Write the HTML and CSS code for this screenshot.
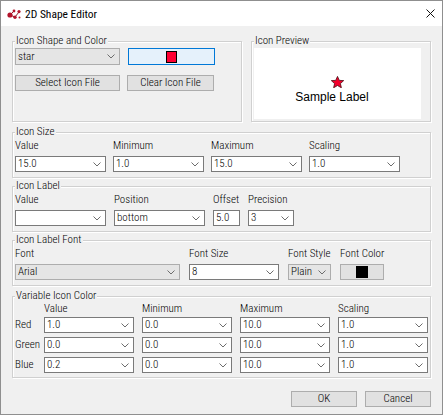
FILE: index.html
```html
<!DOCTYPE html>
<html>
<head>
<meta charset="utf-8">
<title>2D Shape Editor</title>
<link rel="stylesheet" href="styles.css">
</head>
<body>
<div class="window">
  <div class="titlebar">
    <svg class="appicon" width="14" height="10" viewBox="0 0 14 10">
      <g stroke="#8e1a28" stroke-width="1" fill="none">
        <line x1="3" y1="6" x2="8" y2="8"/>
        <line x1="3" y1="6" x2="7" y2="2"/>
        <line x1="8" y1="8" x2="12" y2="3"/>
      </g>
      <g fill="#b3142b">
        <circle cx="3" cy="6" r="2.6"/>
        <circle cx="8" cy="8.2" r="1.7"/>
        <circle cx="7" cy="2" r="1.4"/>
        <circle cx="12" cy="2.6" r="1.6"/>
        <circle cx="12.5" cy="8.5" r="1"/>
      </g>
    </svg>
    <span class="title">2D Shape Editor</span>
    <svg class="close" width="9" height="9" viewBox="0 0 9 9">
      <path d="M0.5 0.5 L8.5 8.5 M8.5 0.5 L0.5 8.5" stroke="#111" stroke-width="1" fill="none"/>
    </svg>
  </div>

  <div class="content">
    <div class="toprow">
      <fieldset class="group g-shape">
        <legend>Icon Shape and Color</legend>
        <div class="shape-row">
          <div class="combo gray w-shape"><span>star</span><svg class="chev" width="8" height="5" viewBox="0 0 8 5"><polyline points="0.5,0.5 4,4 7.5,0.5"/></svg></div>
          <div class="colorbtn focused"><span class="swatch red"></span></div>
        </div>
        <div class="shape-row buttons">
          <div class="btn w-shape">Select Icon File</div>
          <div class="btn w-clear">Clear Icon File</div>
        </div>
      </fieldset>

      <fieldset class="group g-preview">
        <legend>Icon Preview</legend>
        <div class="preview">
          <svg class="star" width="13" height="12" viewBox="0 0 13 12">
            <polygon points="6.5,0.4 8.3,4.4 12.7,4.6 9.4,7.6 10.4,11.8 6.5,9.5 2.6,11.8 3.6,7.6 0.3,4.6 4.7,4.4" fill="#f2002c" stroke="#4a0a12" stroke-width="0.8" stroke-linejoin="miter"/>
          </svg>
          <div class="sample">Sample Label</div>
        </div>
      </fieldset>
    </div>

    <fieldset class="group">
      <legend>Icon Size</legend>
      <div class="grid g-size">
        <div class="lbl">Value</div>
        <div class="lbl">Minimum</div>
        <div class="lbl">Maximum</div>
        <div class="lbl">Scaling</div>
        <div class="combo"><span>15.0</span><svg class="chev" width="8" height="5" viewBox="0 0 8 5"><polyline points="0.5,0.5 4,4 7.5,0.5"/></svg></div>
        <div class="combo"><span>1.0</span><svg class="chev" width="8" height="5" viewBox="0 0 8 5"><polyline points="0.5,0.5 4,4 7.5,0.5"/></svg></div>
        <div class="combo"><span>15.0</span><svg class="chev" width="8" height="5" viewBox="0 0 8 5"><polyline points="0.5,0.5 4,4 7.5,0.5"/></svg></div>
        <div class="combo"><span>1.0</span><svg class="chev" width="8" height="5" viewBox="0 0 8 5"><polyline points="0.5,0.5 4,4 7.5,0.5"/></svg></div>
      </div>
    </fieldset>

    <fieldset class="group">
      <legend>Icon Label</legend>
      <div class="grid g-label">
        <div class="lbl">Value</div>
        <div class="lbl">Position</div>
        <div class="lbl">Offset</div>
        <div class="lbl">Precision</div>
        <div class="combo"><span></span><svg class="chev" width="8" height="5" viewBox="0 0 8 5"><polyline points="0.5,0.5 4,4 7.5,0.5"/></svg></div>
        <div class="combo"><span>bottom</span><svg class="chev" width="8" height="5" viewBox="0 0 8 5"><polyline points="0.5,0.5 4,4 7.5,0.5"/></svg></div>
        <div class="field"><span>5.0</span></div>
        <div class="combo"><span>3</span><svg class="chev" width="8" height="5" viewBox="0 0 8 5"><polyline points="0.5,0.5 4,4 7.5,0.5"/></svg></div>
      </div>
    </fieldset>

    <fieldset class="group">
      <legend>Icon Label Font</legend>
      <div class="grid g-font">
        <div class="lbl">Font</div>
        <div class="lbl">Font Size</div>
        <div class="lbl">Font Style</div>
        <div class="lbl">Font Color</div>
        <div class="combo gray"><span>Arial</span><svg class="chev" width="8" height="5" viewBox="0 0 8 5"><polyline points="0.5,0.5 4,4 7.5,0.5"/></svg></div>
        <div class="combo"><span>8</span><svg class="chev" width="8" height="5" viewBox="0 0 8 5"><polyline points="0.5,0.5 4,4 7.5,0.5"/></svg></div>
        <div class="combo gray"><span>Plain</span><svg class="chev" width="8" height="5" viewBox="0 0 8 5"><polyline points="0.5,0.5 4,4 7.5,0.5"/></svg></div>
        <div class="colorbtn"><span class="swatch black"></span></div>
      </div>
    </fieldset>

    <fieldset class="group g-varbox">
      <legend>Variable Icon Color</legend>
      <div class="grid g-var">
        <div></div>
        <div class="lbl">Value</div>
        <div class="lbl">Minimum</div>
        <div class="lbl">Maximum</div>
        <div class="lbl">Scaling</div>

        <div class="rowlbl">Red</div>
        <div class="combo"><span>1.0</span><svg class="chev" width="8" height="5" viewBox="0 0 8 5"><polyline points="0.5,0.5 4,4 7.5,0.5"/></svg></div>
        <div class="combo"><span>0.0</span><svg class="chev" width="8" height="5" viewBox="0 0 8 5"><polyline points="0.5,0.5 4,4 7.5,0.5"/></svg></div>
        <div class="combo"><span>10.0</span><svg class="chev" width="8" height="5" viewBox="0 0 8 5"><polyline points="0.5,0.5 4,4 7.5,0.5"/></svg></div>
        <div class="combo"><span>1.0</span><svg class="chev" width="8" height="5" viewBox="0 0 8 5"><polyline points="0.5,0.5 4,4 7.5,0.5"/></svg></div>

        <div class="rowlbl">Green</div>
        <div class="combo"><span>0.0</span><svg class="chev" width="8" height="5" viewBox="0 0 8 5"><polyline points="0.5,0.5 4,4 7.5,0.5"/></svg></div>
        <div class="combo"><span>0.0</span><svg class="chev" width="8" height="5" viewBox="0 0 8 5"><polyline points="0.5,0.5 4,4 7.5,0.5"/></svg></div>
        <div class="combo"><span>10.0</span><svg class="chev" width="8" height="5" viewBox="0 0 8 5"><polyline points="0.5,0.5 4,4 7.5,0.5"/></svg></div>
        <div class="combo"><span>1.0</span><svg class="chev" width="8" height="5" viewBox="0 0 8 5"><polyline points="0.5,0.5 4,4 7.5,0.5"/></svg></div>

        <div class="rowlbl">Blue</div>
        <div class="combo"><span>0.2</span><svg class="chev" width="8" height="5" viewBox="0 0 8 5"><polyline points="0.5,0.5 4,4 7.5,0.5"/></svg></div>
        <div class="combo"><span>0.0</span><svg class="chev" width="8" height="5" viewBox="0 0 8 5"><polyline points="0.5,0.5 4,4 7.5,0.5"/></svg></div>
        <div class="combo"><span>10.0</span><svg class="chev" width="8" height="5" viewBox="0 0 8 5"><polyline points="0.5,0.5 4,4 7.5,0.5"/></svg></div>
        <div class="combo"><span>1.0</span><svg class="chev" width="8" height="5" viewBox="0 0 8 5"><polyline points="0.5,0.5 4,4 7.5,0.5"/></svg></div>
      </div>
    </fieldset>

    <div class="actions">
      <div class="btn w-action">OK</div>
      <div class="btn w-action">Cancel</div>
    </div>
  </div>
</div>
</body>
</html>
```

FILE: styles.css
```css
* {
  box-sizing: border-box;
}

html, body {
  margin: 0;
  padding: 0;
  background: #ffffff;
}

body {
  font-family: "Roboto Condensed", "Liberation Sans", sans-serif;
  font-weight: 300;
  font-size: 11px;
  color: #000;
}

.window {
  width: 443px;
  height: 415px;
  border: 1px solid #8f8f8f;
  background: #f0f0f0;
  display: flex;
  flex-direction: column;
}

.titlebar {
  height: 25px;
  flex: 0 0 25px;
  background: #ffffff;
  display: flex;
  align-items: center;
  padding-left: 6px;
}

.appicon {
  display: block;
  margin-right: 4px;
}

.title {
  font-size: 11.5px;
  font-weight: 400;
  color: #000;
  line-height: 14px;
}

.close {
  display: block;
  margin-left: auto;
  margin-right: 7px;
}

.content {
  flex: 1;
  padding: 9px 11px 0 11px;
  display: flex;
  flex-direction: column;
  gap: 2px;
}

.toprow {
  display: flex;
  gap: 9px;
  align-items: stretch;
  margin-bottom: 2px;
}

fieldset.group {
  margin: 0;
  min-width: 0;
  padding: 1px 2px 5px 2px;
  border: 1px solid #d0d0d0;
  box-shadow: inset 1px 1px 0 #ffffff, 1px 1px 0 #ffffff;
}

fieldset.group > legend {
  padding: 0 1px;
  font-size: 11px;
  line-height: 12px;
  background: #f0f0f0;
}

.g-shape {
  width: 230px;
}

.g-preview.group {
  width: 180px;
  padding: 1px 9px 2px 2px;
}

.shape-row {
  display: flex;
  gap: 8px;
}

.shape-row.buttons {
  margin-top: 10px;
  gap: 7px;
}

.w-shape {
  width: 105px;
}

.w-clear {
  width: 87px;
}

.preview {
  width: 167px;
  height: 71px;
  background: #ffffff;
  display: flex;
  flex-direction: column;
  align-items: center;
  padding-top: 28px;
}

.star {
  display: block;
}

.sample {
  font-family: "Liberation Sans", Arial, sans-serif;
  font-weight: 400;
  font-size: 12px;
  line-height: 14px;
  margin-top: 2px;
  margin-right: 11px;
  color: #000;
}

/* controls */
.combo {
  height: 16px;
  background: #ffffff;
  border: 1px solid #7a7a7a;
  display: flex;
  align-items: center;
  justify-content: space-between;
  padding: 0 4px 0 2px;
  line-height: 14px;
  white-space: nowrap;
  overflow: hidden;
}

.combo.gray {
  background: #e5e5e5;
  border-color: #adadad;
}

.g-shape .combo {
  height: 17px;
}

.chev {
  display: block;
  flex: 0 0 8px;
}

.chev polyline {
  fill: none;
  stroke: #6d6d6d;
  stroke-width: 1;
}

.field {
  height: 16px;
  background: #ffffff;
  border: 1px solid #7a7a7a;
  padding: 0 2px;
  line-height: 14px;
}

.btn {
  height: 16px;
  background: #e1e1e1;
  border: 1px solid #adadad;
  text-align: center;
  line-height: 14px;
  white-space: nowrap;
}

.colorbtn {
  height: 16px;
  background: #e1e1e1;
  border: 1px solid #adadad;
  display: flex;
  align-items: center;
  justify-content: center;
}

.colorbtn.focused {
  width: 87px;
  height: 17px;
  background: #e5f1fb;
  border-color: #0078d7;
}

.swatch {
  display: block;
  width: 11px;
  height: 12px;
  border: 1px solid #000;
}

.swatch.red {
  background: #ff0033;
}

.swatch.black {
  background: #000;
  width: 12px;
  height: 12px;
}

/* grids */
.grid {
  display: grid;
  row-gap: 3px;
  grid-auto-rows: 16px;
}

.grid .lbl {
  line-height: 14px;
  height: 14px;
  white-space: nowrap;
}

.g-size {
  grid-template-columns: 91px 91px 91px 91px;
  grid-template-rows: 14px 16px;
  column-gap: 7px;
}

.g-label {
  grid-template-columns: 91px 91px 27px 46px;
  grid-template-rows: 14px 16px;
  column-gap: 8px;
}

.g-font {
  grid-template-columns: 165px 90px 43px 44px;
  grid-template-rows: 14px 16px;
  column-gap: 9px;
}

.g-varbox.group {
  margin-top: 2px;
  padding-bottom: 4px;
}

.g-var {
  grid-template-columns: 21px 90px 90px 90px 90px;
  grid-template-rows: 10px 16px 16px 16px;
  column-gap: 8px;
  row-gap: 4px;
}

.g-var .lbl {
  line-height: 12px;
  height: 12px;
}

.rowlbl {
  line-height: 16px;
  white-space: nowrap;
}

.actions {
  display: flex;
  justify-content: flex-end;
  gap: 8px;
  margin-top: 11px;
}

.w-action {
  width: 66px;
}
```
